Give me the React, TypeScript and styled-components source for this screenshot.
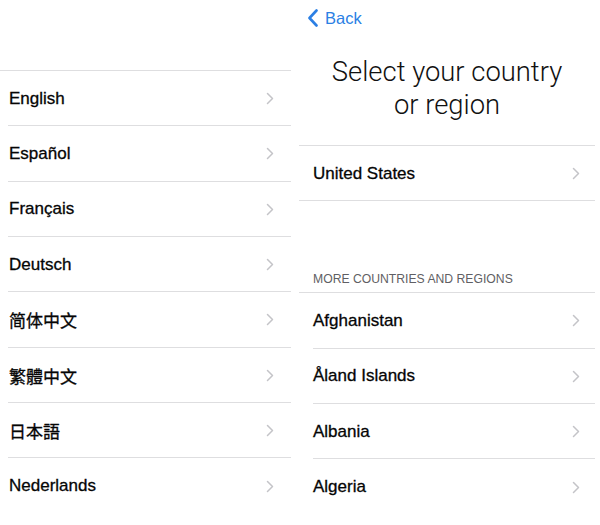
import React from "react";
import styled, { createGlobalStyle } from "styled-components";

const Global = createGlobalStyle`
  html, body { margin: 0; padding: 0; background: #ffffff; }
  body { font-family: "Liberation Sans", Arial, "Noto Sans CJK SC", sans-serif; }
`;

const Page = styled.div`
  display: flex;
  width: 600px;
  height: 525px;
  overflow: hidden;
  background: #fff;
`;

const LeftPanel = styled.div`
  width: 291px;
  padding-top: 70px;
  flex-shrink: 0;
`;

const RightPanel = styled.div`
  width: 296px;
  margin-left: 8px;
  flex-shrink: 0;
  display: flex;
  flex-direction: column;
`;

const List = styled.div`
  border-top: 1px solid #dedee0;
  display: flex;
  flex-direction: column;
`;

const Row = styled.div<{ $inset: number }>`
  height: 55.33px;
  box-sizing: border-box;
  padding-left: ${(p) => p.$inset}px;
  display: flex;
  flex-shrink: 0;
`;

const RowInner = styled.div<{ $pad: number; $right: number; $last?: boolean }>`
  flex: 1;
  display: flex;
  align-items: center;
  justify-content: space-between;
  padding-top: 1px;
  padding-left: ${(p) => p.$pad}px;
  padding-right: ${(p) => p.$right}px;
  border-bottom: ${(p) => (p.$last ? "none" : "1px solid #dedee0")};
`;

const Label = styled.span<{ $cjk?: string }>`
  font-family: "Liberation Sans", Arial, ${(p) => p.$cjk || '"Noto Sans CJK SC"'}, sans-serif;
  font-size: 17px;
  color: #050505;
  -webkit-text-stroke: 0.3px #050505;
`;

const Chevron = () => (
  <svg width="8" height="13" viewBox="0 0 8 13">
    <path d="M1.5 1.5 L6.5 6.5 L1.5 11.5" fill="none" stroke="#c4c4c8" strokeWidth="1.5" strokeLinecap="round" strokeLinejoin="round" />
  </svg>
);

const NavBar = styled.div`
  height: 36px;
  display: flex;
  align-items: center;
  padding-left: 8px;
  gap: 6px;
`;

const BackText = styled.span`
  font-family: "Liberation Sans", Arial, sans-serif;
  font-size: 16.5px;
  color: #2b7fe4;
`;

const Title = styled.h1`
  margin: 20px 0 0;
  height: 89px;
  text-align: center;
  font-family: Roboto, "Liberation Sans", sans-serif;
  font-weight: 300;
  font-size: 27.4px;
  line-height: 33px;
  color: #111;
`;

const SectionHeader = styled.div`
  height: 91px;
  box-sizing: border-box;
  display: flex;
  align-items: flex-end;
  padding: 0 0 6px 14px;
  font-family: "Liberation Sans", Arial, sans-serif;
  font-size: 12.2px;
  color: #5f5f64;
`;

const languages: { label: string; cjk?: string }[] = [
  { label: "English" },
  { label: "Español" },
  { label: "Français" },
  { label: "Deutsch" },
  { label: "简体中文", cjk: '"Noto Sans CJK SC"' },
  { label: "繁體中文", cjk: '"Noto Sans CJK TC"' },
  { label: "日本語", cjk: '"Noto Sans CJK JP"' },
  { label: "Nederlands" },
];

const countries = ["Afghanistan", "Åland Islands", "Albania", "Algeria"];

export default function App() {
  return (
    <>
      <Global />
      <Page>
        <LeftPanel>
          <List>
            {languages.map((l, i) => (
              <Row key={l.label} $inset={8}>
                <RowInner $pad={1} $right={17} $last={i === languages.length - 1}>
                  <Label $cjk={l.cjk}>{l.label}</Label>
                  <Chevron />
                </RowInner>
              </Row>
            ))}
          </List>
        </LeftPanel>
        <RightPanel>
          <NavBar>
            <svg width="12" height="18" viewBox="0 0 12 18">
              <path d="M9.5 1.5 L2.5 9 L9.5 16.5" fill="none" stroke="#2b7fe4" strokeWidth="2.6" strokeLinecap="round" strokeLinejoin="round" />
            </svg>
            <BackText>Back</BackText>
          </NavBar>
          <Title>
            Select your country
            <br />
            or region
          </Title>
          <List>
            <Row $inset={0}>
              <RowInner $pad={14} $right={15}>
                <Label>United States</Label>
                <Chevron />
              </RowInner>
            </Row>
          </List>
          <SectionHeader>MORE COUNTRIES AND REGIONS</SectionHeader>
          <List>
            {countries.map((c, i) => (
              <Row key={c} $inset={14}>
                <RowInner $pad={0} $right={15} $last={i === countries.length - 1}>
                  <Label>{c}</Label>
                  <Chevron />
                </RowInner>
              </Row>
            ))}
          </List>
        </RightPanel>
      </Page>
    </>
  );
}
